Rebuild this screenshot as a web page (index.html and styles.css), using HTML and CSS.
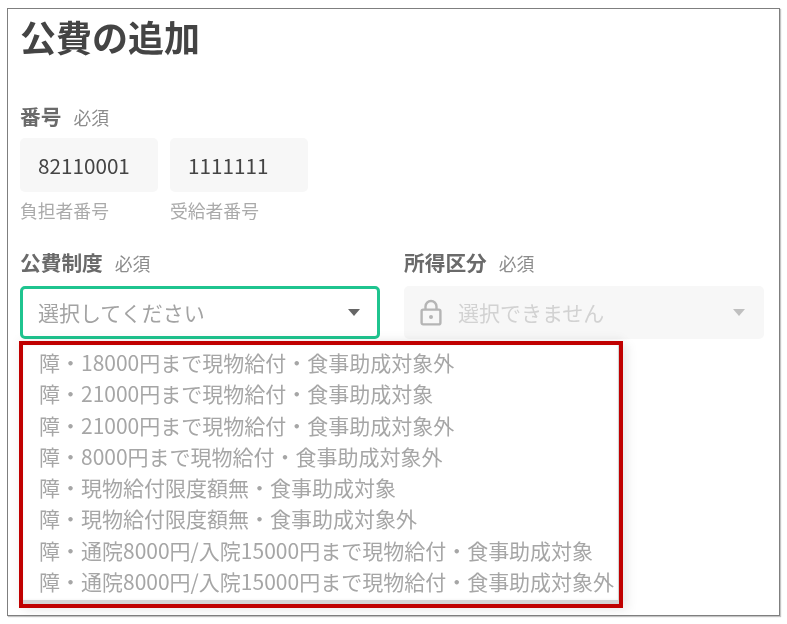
FILE: index.html
```html
<!DOCTYPE html>
<html lang="ja">
<head>
<meta charset="utf-8">
<title>公費の追加</title>
<link rel="stylesheet" href="styles.css">
</head>
<body>
<main class="frame">
  <h1 class="title">公費の追加</h1>
  <section class="numbers">
    <div class="label-row"><span class="label">番号</span><span class="required">必須</span></div>
    <div class="number-fields">
      <div class="number-field">
        <div class="number-input">82110001</div>
        <div class="caption">負担者番号</div>
      </div>
      <div class="number-field">
        <div class="number-input">1111111</div>
        <div class="caption">受給者番号</div>
      </div>
    </div>
  </section>
  <section class="selects">
    <div class="select-col">
      <div class="label-row"><span class="label">公費制度</span><span class="required">必須</span></div>
      <div class="select select-active">
        <span class="select-text">選択してください</span>
        <span class="caret"></span>
      </div>
    </div>
    <div class="select-col">
      <div class="label-row"><span class="label">所得区分</span><span class="required">必須</span></div>
      <div class="select select-disabled">
        <svg class="lock" width="24" height="28" viewBox="0 0 24 28" fill="none">
          <path d="M6.5 12V8.5a5.5 5.5 0 0 1 11 0V12" stroke="#b5b5b5" stroke-width="2.4"/>
          <rect x="2.6" y="11.6" width="18.8" height="14.8" rx="1.6" stroke="#b5b5b5" stroke-width="2.4"/>
          <circle cx="12" cy="19" r="2" fill="#b5b5b5"/>
        </svg>
        <span class="select-text">選択できません</span>
        <span class="caret caret-disabled"></span>
      </div>
    </div>
  </section>
  <div class="dropdown">
    <ul class="options">
      <li>障・18000円まで現物給付・食事助成対象外</li>
      <li>障・21000円まで現物給付・食事助成対象</li>
      <li>障・21000円まで現物給付・食事助成対象外</li>
      <li>障・8000円まで現物給付・食事助成対象外</li>
      <li>障・現物給付限度額無・食事助成対象</li>
      <li>障・現物給付限度額無・食事助成対象外</li>
      <li>障・通院8000円/入院15000円まで現物給付・食事助成対象</li>
      <li>障・通院8000円/入院15000円まで現物給付・食事助成対象外</li>
    </ul>
  </div>
</main>
</body>
</html>
```
FILE: styles.css
```css
* { box-sizing: border-box; }
html, body { margin: 0; padding: 0; background: #fff; }
body {
  width: 787px;
  height: 624px;
  padding: 8px 7px 0 7px;
  font-family: "Noto Sans CJK JP", "Noto Sans", sans-serif;
  overflow: hidden;
}
.frame {
  position: relative;
  width: 773px;
  height: 608px;
  border: 1px solid #7f7f7f;
  box-shadow: 1px 1px 1px #c4c4c4;
  padding: 0 12px;
}
.title {
  margin: 0;
  padding-top: 2px;
  height: 97px;
  font-size: 36px;
  line-height: 50px;
  font-weight: 700;
  color: #444;
  filter: blur(0.35px);
}
.label-row {
  display: flex;
  align-items: baseline;
  gap: 12px;
  height: 32px;
  line-height: 20px;
  filter: blur(0.35px);
}
.label { font-size: 20.7px; font-weight: 700; color: #6a6a6a; line-height: 20px; }
.required { font-size: 17.8px; color: #8c8c8c; }
.number-fields { display: flex; gap: 12px; }
.number-field { width: 138px; }
.number-input {
  height: 54px;
  padding-left: 18px;
  line-height: 54px;
  background: #f7f7f7;
  border-radius: 5px;
  font-size: 20.7px;
  color: #444;
  filter: blur(0.3px);
}
.caption {
  margin-top: 5px;
  font-size: 17.8px;
  line-height: 26px;
  color: #aaa;
  filter: blur(0.35px);
}
.selects {
  display: flex;
  gap: 24px;
  margin-top: 29px;
}
.select-col { width: 360px; }
.select-col .label-row { height: 33.5px; }
.select {
  display: flex;
  align-items: center;
  height: 53.5px;
  padding: 0 19px 0 18px;
  border-radius: 5px;
  font-size: 21px;
  filter: blur(0.3px);
}
.select-active { border: 3px solid #1fc48f; padding-left: 15px; padding-right: 17px; color: #a3a3a3; }
.select-disabled { background: #f7f7f7; color: #d2d2d2; }
.select-text { flex: 1; }
.lock { margin-right: 15px; margin-left: -3px; }
.caret {
  width: 0;
  height: 0;
  border-left: 6.5px solid transparent;
  border-right: 6.5px solid transparent;
  border-top: 7px solid #666;
}
.caret-disabled { border-top-color: #c0c0c0; }
.dropdown {
  position: absolute;
  left: 11px;
  top: 332px;
  width: 604px;
  height: 267px;
  border: 4px solid #c00000;
  background: #fff;
  box-shadow: 0 -2px 10px rgba(0, 0, 0, 0.06), 6px 3px 10px rgba(0, 0, 0, 0.06);
}
.options {
  list-style: none;
  margin: 0;
  padding: 2px 0 0 16px;
  height: 100%;
  border-right: 1.5px solid #d4d4d4;
  border-bottom: 4px solid #d4d4d4;
  box-shadow: inset 0 0 3px rgba(0, 0, 0, 0.06);
  font-size: 21px;
  line-height: 31.3px;
  color: #a6a6a6;
  white-space: nowrap;
}
.options li { filter: blur(0.35px); }
```
